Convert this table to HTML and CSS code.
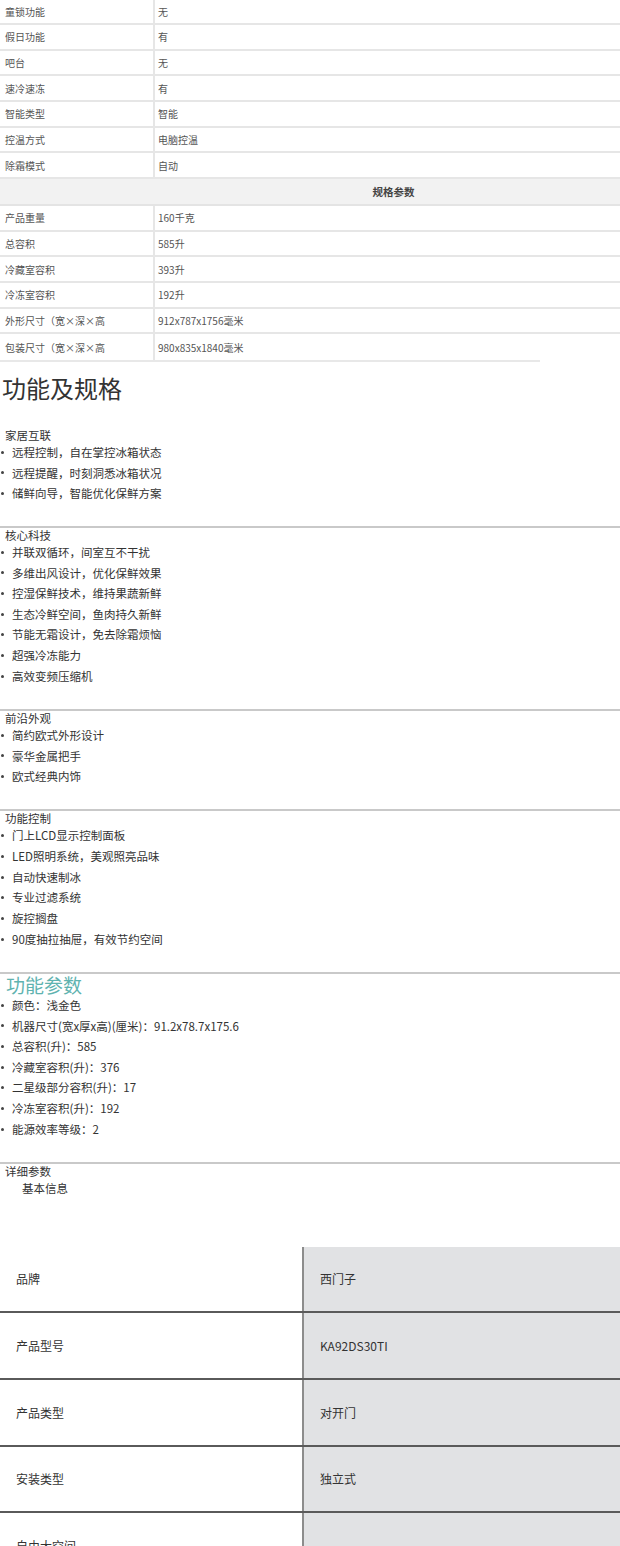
FILE: index.html
```html
<!DOCTYPE html>
<html lang="zh">
<head>
<meta charset="utf-8">
<title>功能及规格</title>
<link rel="stylesheet" href="styles.css">
</head>
<body>
<div class="spec">
  <div class="row first"><div class="k">童锁功能</div><div class="v">无</div></div>
  <div class="row"><div class="k">假日功能</div><div class="v">有</div></div>
  <div class="row"><div class="k">吧台</div><div class="v">无</div></div>
  <div class="row"><div class="k">速冷速冻</div><div class="v">有</div></div>
  <div class="row"><div class="k">智能类型</div><div class="v">智能</div></div>
  <div class="row"><div class="k">控温方式</div><div class="v">电脑控温</div></div>
  <div class="row"><div class="k">除霜模式</div><div class="v">自动</div></div>
  <div class="row head"><div class="h">规格参数</div></div>
  <div class="row"><div class="k">产品重量</div><div class="v">160千克</div></div>
  <div class="row"><div class="k">总容积</div><div class="v">585升</div></div>
  <div class="row"><div class="k">冷藏室容积</div><div class="v">393升</div></div>
  <div class="row"><div class="k">冷冻室容积</div><div class="v">192升</div></div>
  <div class="row"><div class="k">外形尺寸（宽×深×高</div><div class="v">912x787x1756毫米</div></div>
  <div class="row last"><div class="k">包装尺寸（宽×深×高</div><div class="v">980x835x1840毫米</div></div>
  <div class="spec-end"></div>
</div>

<h1 class="title">功能及规格</h1>

<section class="feat plain">
  <div class="feat-h">家居互联</div>
  <ul class="dots">
    <li>远程控制，自在掌控冰箱状态</li>
    <li>远程提醒，时刻洞悉冰箱状况</li>
    <li>储鲜向导，智能优化保鲜方案</li>
  </ul>
</section>

<section class="feat">
  <div class="feat-h">核心科技</div>
  <ul class="dots">
    <li>并联双循环，间室互不干扰</li>
    <li>多维出风设计，优化保鲜效果</li>
    <li>控湿保鲜技术，维持果蔬新鲜</li>
    <li>生态冷鲜空间，鱼肉持久新鲜</li>
    <li>节能无霜设计，免去除霜烦恼</li>
    <li>超强冷冻能力</li>
    <li>高效变频压缩机</li>
  </ul>
</section>

<section class="feat">
  <div class="feat-h">前沿外观</div>
  <ul class="dots">
    <li>简约欧式外形设计</li>
    <li>豪华金属把手</li>
    <li>欧式经典内饰</li>
  </ul>
</section>

<section class="feat">
  <div class="feat-h">功能控制</div>
  <ul class="dots">
    <li>门上LCD显示控制面板</li>
    <li>LED照明系统，美观照亮品味</li>
    <li>自动快速制冰</li>
    <li>专业过滤系统</li>
    <li>旋控搁盘</li>
    <li>90度抽拉抽屉，有效节约空间</li>
  </ul>
</section>

<section class="feat">
  <div class="feat-h big">功能参数</div>
  <ul class="dots">
    <li>颜色：浅金色</li>
    <li>机器尺寸(宽x厚x高)(厘米)：91.2x78.7x175.6</li>
    <li>总容积(升)：585</li>
    <li>冷藏室容积(升)：376</li>
    <li>二星级部分容积(升)：17</li>
    <li>冷冻室容积(升)：192</li>
    <li>能源效率等级：2</li>
  </ul>
</section>

<section class="detail">
  <div class="feat-h">详细参数</div>
  <div class="sub">基本信息</div>
</section>

<div class="params">
  <div class="p-row"><div class="p-k">品牌</div><div class="p-v">西门子</div></div>
  <div class="p-row"><div class="p-k">产品型号</div><div class="p-v">KA92DS30TI</div></div>
  <div class="p-row"><div class="p-k">产品类型</div><div class="p-v">对开门</div></div>
  <div class="p-row"><div class="p-k">安装类型</div><div class="p-v">独立式</div></div>
  <div class="p-row"><div class="p-k">自由大空间</div><div class="p-v"></div></div>
</div>
</body>
</html>
```

FILE: styles.css
```css
html, body {
  margin: 0;
  padding: 0;
  background: #ffffff;
}

body {
  font-family: "Noto Sans CJK SC", "Liberation Sans", sans-serif;
  color: #333333;
  width: 620px;
  overflow: hidden;
}

/* top spec table */
.spec {
  display: flex;
  flex-direction: column;
}

.row {
  display: grid;
  grid-template-columns: 155px 1fr;
  height: 25.67px;
  box-sizing: border-box;
  border-bottom: 2px solid #e6e6e6;
  font-size: 10px;
  color: #555555;
}

.row.first {
  height: 25px;
}

.row.last {
  border-bottom: none;
  height: 25.67px;
}

.k, .v {
  display: flex;
  align-items: center;
}

.k {
  padding-left: 5px;
  border-right: 2px solid #e6e6e6;
}

.v {
  padding-left: 3px;
}

.row.head {
  display: flex;
  height: 27px;
  background: #f2f2f2;
  border-bottom: 2px solid #e4e4e4;
}

.h {
  flex: 1;
  display: flex;
  align-items: center;
  justify-content: center;
  padding-left: 167px;
  font-size: 10.5px;
  font-weight: bold;
  color: #444444;
}

.spec-end {
  width: 540px;
  height: 2px;
  background: #e8e8e8;
}

/* headline */
.title {
  margin: 11px 0 0 2px;
  font-size: 24px;
  line-height: 30px;
  font-weight: normal;
  color: #333333;
}

/* feature sections */
.feat {
  border-top: 2px solid #c9c9c9;
  padding: 1px 0 22.5px 0;
}

.feat.plain {
  border-top: none;
  padding: 26px 0 22px 0;
}

.feat-h {
  font-size: 11.5px;
  line-height: 13px;
  padding-left: 5px;
  color: #333333;
}

.feat-h.big {
  font-size: 19px;
  line-height: 20px;
  padding-left: 6px;
  color: #5fb3b0;
}

.dots {
  list-style: none;
  margin: 0;
  padding: 0;
}

.dots li {
  display: flex;
  align-items: center;
  font-size: 11.5px;
  line-height: 20.67px;
  height: 20.67px;
  color: #333333;
}

.dots li::before {
  content: "";
  width: 3px;
  height: 3px;
  border-radius: 50%;
  background: #444444;
  margin: 0 8px 0 1px;
  flex: none;
}

/* detail block */
.detail {
  border-top: 2px solid #c9c9c9;
  padding-top: 1px;
}

.sub {
  font-size: 11.5px;
  line-height: 20px;
  padding-left: 22px;
  color: #333333;
}

/* big params table */
.params {
  margin-top: 48.6px;
  display: flex;
  flex-direction: column;
}

.p-row {
  display: grid;
  grid-template-columns: 304px 1fr;
  height: 66.67px;
  box-sizing: border-box;
  border-bottom: 2px solid #5a5a5a;
  font-size: 12px;
  color: #333333;
}

.p-k {
  display: flex;
  align-items: center;
  padding-left: 16px;
  border-right: 2px solid #8c8c8c;
}

.p-v {
  display: flex;
  align-items: center;
  padding-left: 16px;
  background: #e1e2e4;
}
```
